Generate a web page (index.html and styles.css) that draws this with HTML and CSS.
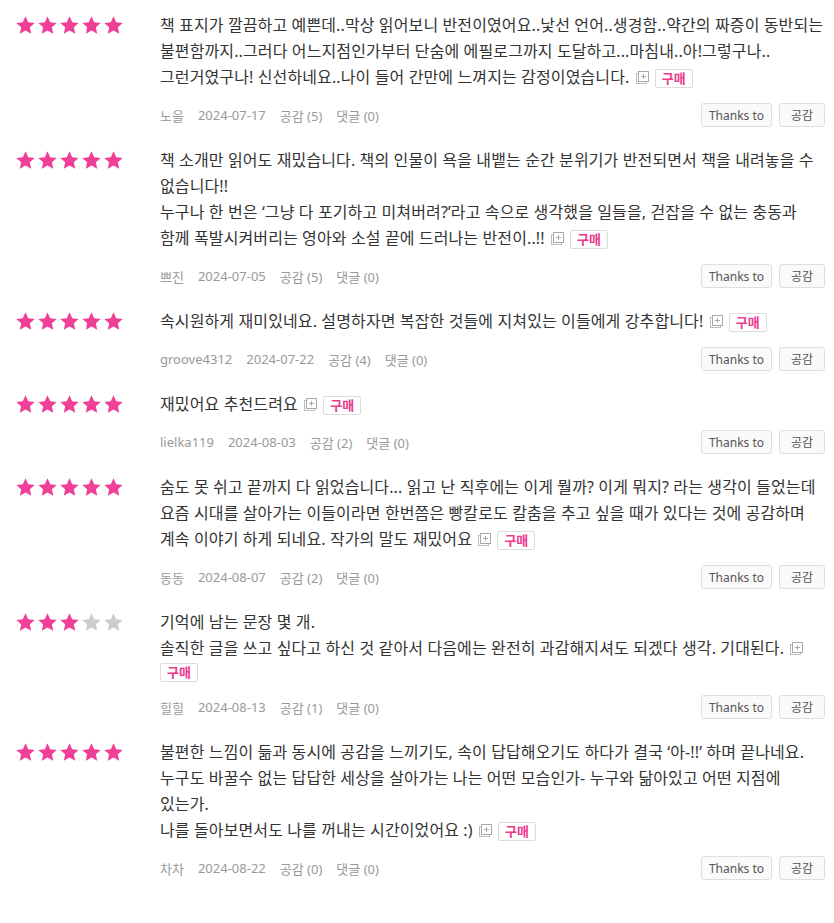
FILE: index.html
```html
<!DOCTYPE html>
<html lang="ko">
<head>
<meta charset="utf-8">
<link rel="stylesheet" href="styles.css">
</head>
<body>
<svg width="0" height="0" class="defs">
  <defs>
    <symbol id="star" viewBox="0 0 24 24"><polygon points="12,1.5 15.1,8.2 22.5,9 17,14.1 18.5,21.5 12,17.8 5.5,21.5 7,14.1 1.5,9 8.9,8.2"/></symbol>
    <symbol id="more" viewBox="0 0 13 13"><rect x="0.5" y="2.5" width="10" height="10" fill="none" stroke="#bdbdbd"/><rect x="2.5" y="0.5" width="10" height="10" fill="#fff" stroke="#a8a8a8"/><path d="M7.5 3v5M5 5.5h5" stroke="#a8a8a8"/></symbol>
  </defs>
</svg>
<ul class="reviews">
  <li class="review">
    <div class="stars"><svg class="star on"><use href="#star"/></svg><svg class="star on"><use href="#star"/></svg><svg class="star on"><use href="#star"/></svg><svg class="star on"><use href="#star"/></svg><svg class="star on"><use href="#star"/></svg></div>
    <div class="body">
      <p class="content"><span class="text">책 표지가 깔끔하고 예쁜데..막상 읽어보니 반전이였어요..낯선 언어..생경함..약간의 짜증이 동반되는 불편함까지..그러다 어느지점인가부터 단숨에 에필로그까지 도달하고...마침내..아!그렇구나..<br>그런거였구나! 신선하네요..나이 들어 간만에 느껴지는 감정이였습니다.</span> <svg class="more"><use href="#more"/></svg> <span class="tag">구매</span></p>
      <div class="meta"><div class="info"><span>노을</span><span>2024-07-17</span><span>공감 (5)</span><span>댓글 (0)</span></div><div class="btns"><button class="btn">Thanks to</button><button class="btn">공감</button></div></div>
    </div>
  </li>
  <li class="review">
    <div class="stars"><svg class="star on"><use href="#star"/></svg><svg class="star on"><use href="#star"/></svg><svg class="star on"><use href="#star"/></svg><svg class="star on"><use href="#star"/></svg><svg class="star on"><use href="#star"/></svg></div>
    <div class="body">
      <p class="content"><span class="text">책 소개만 읽어도 재밌습니다. 책의 인물이 욕을 내뱉는 순간 분위기가 반전되면서 책을 내려놓을 수 없습니다!!<br>누구나 한 번은 ‘그냥 다 포기하고 미쳐버려?’라고 속으로 생각했을 일들을, 걷잡을 수 없는 충동과 함께 폭발시켜버리는 영아와 소설 끝에 드러나는 반전이..!!</span> <svg class="more"><use href="#more"/></svg> <span class="tag">구매</span></p>
      <div class="meta"><div class="info"><span>쁘진</span><span>2024-07-05</span><span>공감 (5)</span><span>댓글 (0)</span></div><div class="btns"><button class="btn">Thanks to</button><button class="btn">공감</button></div></div>
    </div>
  </li>
  <li class="review">
    <div class="stars"><svg class="star on"><use href="#star"/></svg><svg class="star on"><use href="#star"/></svg><svg class="star on"><use href="#star"/></svg><svg class="star on"><use href="#star"/></svg><svg class="star on"><use href="#star"/></svg></div>
    <div class="body">
      <p class="content"><span class="text">속시원하게 재미있네요. 설명하자면 복잡한 것들에 지쳐있는 이들에게 강추합니다!</span> <svg class="more"><use href="#more"/></svg> <span class="tag">구매</span></p>
      <div class="meta"><div class="info"><span>groove4312</span><span>2024-07-22</span><span>공감 (4)</span><span>댓글 (0)</span></div><div class="btns"><button class="btn">Thanks to</button><button class="btn">공감</button></div></div>
    </div>
  </li>
  <li class="review">
    <div class="stars"><svg class="star on"><use href="#star"/></svg><svg class="star on"><use href="#star"/></svg><svg class="star on"><use href="#star"/></svg><svg class="star on"><use href="#star"/></svg><svg class="star on"><use href="#star"/></svg></div>
    <div class="body">
      <p class="content"><span class="text">재밌어요 추천드려요</span> <svg class="more"><use href="#more"/></svg> <span class="tag">구매</span></p>
      <div class="meta"><div class="info"><span>lielka119</span><span>2024-08-03</span><span>공감 (2)</span><span>댓글 (0)</span></div><div class="btns"><button class="btn">Thanks to</button><button class="btn">공감</button></div></div>
    </div>
  </li>
  <li class="review">
    <div class="stars"><svg class="star on"><use href="#star"/></svg><svg class="star on"><use href="#star"/></svg><svg class="star on"><use href="#star"/></svg><svg class="star on"><use href="#star"/></svg><svg class="star on"><use href="#star"/></svg></div>
    <div class="body">
      <p class="content"><span class="text">숨도 못 쉬고 끝까지 다 읽었습니다... 읽고 난 직후에는 이게 뭘까? 이게 뭐지? 라는 생각이 들었는데 요즘 시대를 살아가는 이들이라면 한번쯤은 빵칼로도 칼춤을 추고 싶을 때가 있다는 것에 공감하며 계속 이야기 하게 되네요. 작가의 말도 재밌어요</span> <svg class="more"><use href="#more"/></svg> <span class="tag">구매</span></p>
      <div class="meta"><div class="info"><span>동동</span><span>2024-08-07</span><span>공감 (2)</span><span>댓글 (0)</span></div><div class="btns"><button class="btn">Thanks to</button><button class="btn">공감</button></div></div>
    </div>
  </li>
  <li class="review">
    <div class="stars"><svg class="star on"><use href="#star"/></svg><svg class="star on"><use href="#star"/></svg><svg class="star on"><use href="#star"/></svg><svg class="star"><use href="#star"/></svg><svg class="star"><use href="#star"/></svg></div>
    <div class="body">
      <p class="content"><span class="text">기억에 남는 문장 몇 개.<br>솔직한 글을 쓰고 싶다고 하신 것 같아서 다음에는 완전히 과감해지셔도 되겠다 생각. 기대된다.</span> <svg class="more"><use href="#more"/></svg> <span class="tag">구매</span></p>
      <div class="meta"><div class="info"><span>힐힐</span><span>2024-08-13</span><span>공감 (1)</span><span>댓글 (0)</span></div><div class="btns"><button class="btn">Thanks to</button><button class="btn">공감</button></div></div>
    </div>
  </li>
  <li class="review">
    <div class="stars"><svg class="star on"><use href="#star"/></svg><svg class="star on"><use href="#star"/></svg><svg class="star on"><use href="#star"/></svg><svg class="star on"><use href="#star"/></svg><svg class="star on"><use href="#star"/></svg></div>
    <div class="body">
      <p class="content"><span class="text">불편한 느낌이 듦과 동시에 공감을 느끼기도, 속이 답답해오기도 하다가 결국 ‘아-!!’ 하며 끝나네요.<br>누구도 바꿀수 없는 답답한 세상을 살아가는 나는 어떤 모습인가- 누구와 닮아있고 어떤 지점에 있는가.<br>나를 돌아보면서도 나를 꺼내는 시간이었어요 :)</span> <svg class="more"><use href="#more"/></svg> <span class="tag">구매</span></p>
      <div class="meta"><div class="info"><span>차차</span><span>2024-08-22</span><span>공감 (0)</span><span>댓글 (0)</span></div><div class="btns"><button class="btn">Thanks to</button><button class="btn">공감</button></div></div>
    </div>
  </li>
</ul>
</body>
</html>
```

FILE: styles.css
```css
* { box-sizing: border-box; }
html, body { margin: 0; padding: 0; background: #fff; }
body {
  font-family: "Noto Sans", "Noto Sans CJK KR", sans-serif;
  color: #333;
  font-size: 16px;
}
.defs { position: absolute; width: 0; height: 0; overflow: hidden; }
.reviews {
  list-style: none;
  margin: 0;
  padding: 1px 9px 0 15px;
}
.review {
  display: grid;
  grid-template-columns: 145px 1fr;
  padding: 11px 0 9px;
}
.stars {
  display: flex;
  gap: 1px;
  height: 26px;
  align-items: center;
}
.star {
  width: 21px;
  height: 21px;
  fill: #cccccc;
}
.star.on { fill: #ef3f97; }
.body { min-width: 0; }
.content {
  margin: 0;
  line-height: 20px;
  word-break: keep-all;
  overflow-wrap: break-word;
}
.text {
  font-size: 16px;
  line-height: 26px;
  letter-spacing: 0.12px;
  color: #333;
}
.more {
  width: 13px;
  height: 13px;
  vertical-align: -1px;
  margin: 0 2px 0 2px;
}
.tag {
  display: inline-block;
  font-size: 13px;
  line-height: 17px;
  padding: 0 6px;
  border: 1px solid #dcdcdc;
  border-radius: 2px;
  color: #ec3b8e;
  font-weight: bold;
  vertical-align: middle;
  background: #fff;
}
.meta {
  display: flex;
  justify-content: space-between;
  align-items: center;
  margin-top: 13px;
  height: 24px;
}
.info {
  display: flex;
  gap: 14px;
  font-size: 13px;
  color: #999;
}
.btns { display: flex; gap: 7px; }
.btn {
  font-family: inherit;
  font-size: 12px;
  color: #555;
  height: 24px;
  min-width: 46px;
  padding: 0 7px;
  border: 1px solid #dedede;
  border-radius: 3px;
  background: #fafafa;
  cursor: pointer;
}
```
